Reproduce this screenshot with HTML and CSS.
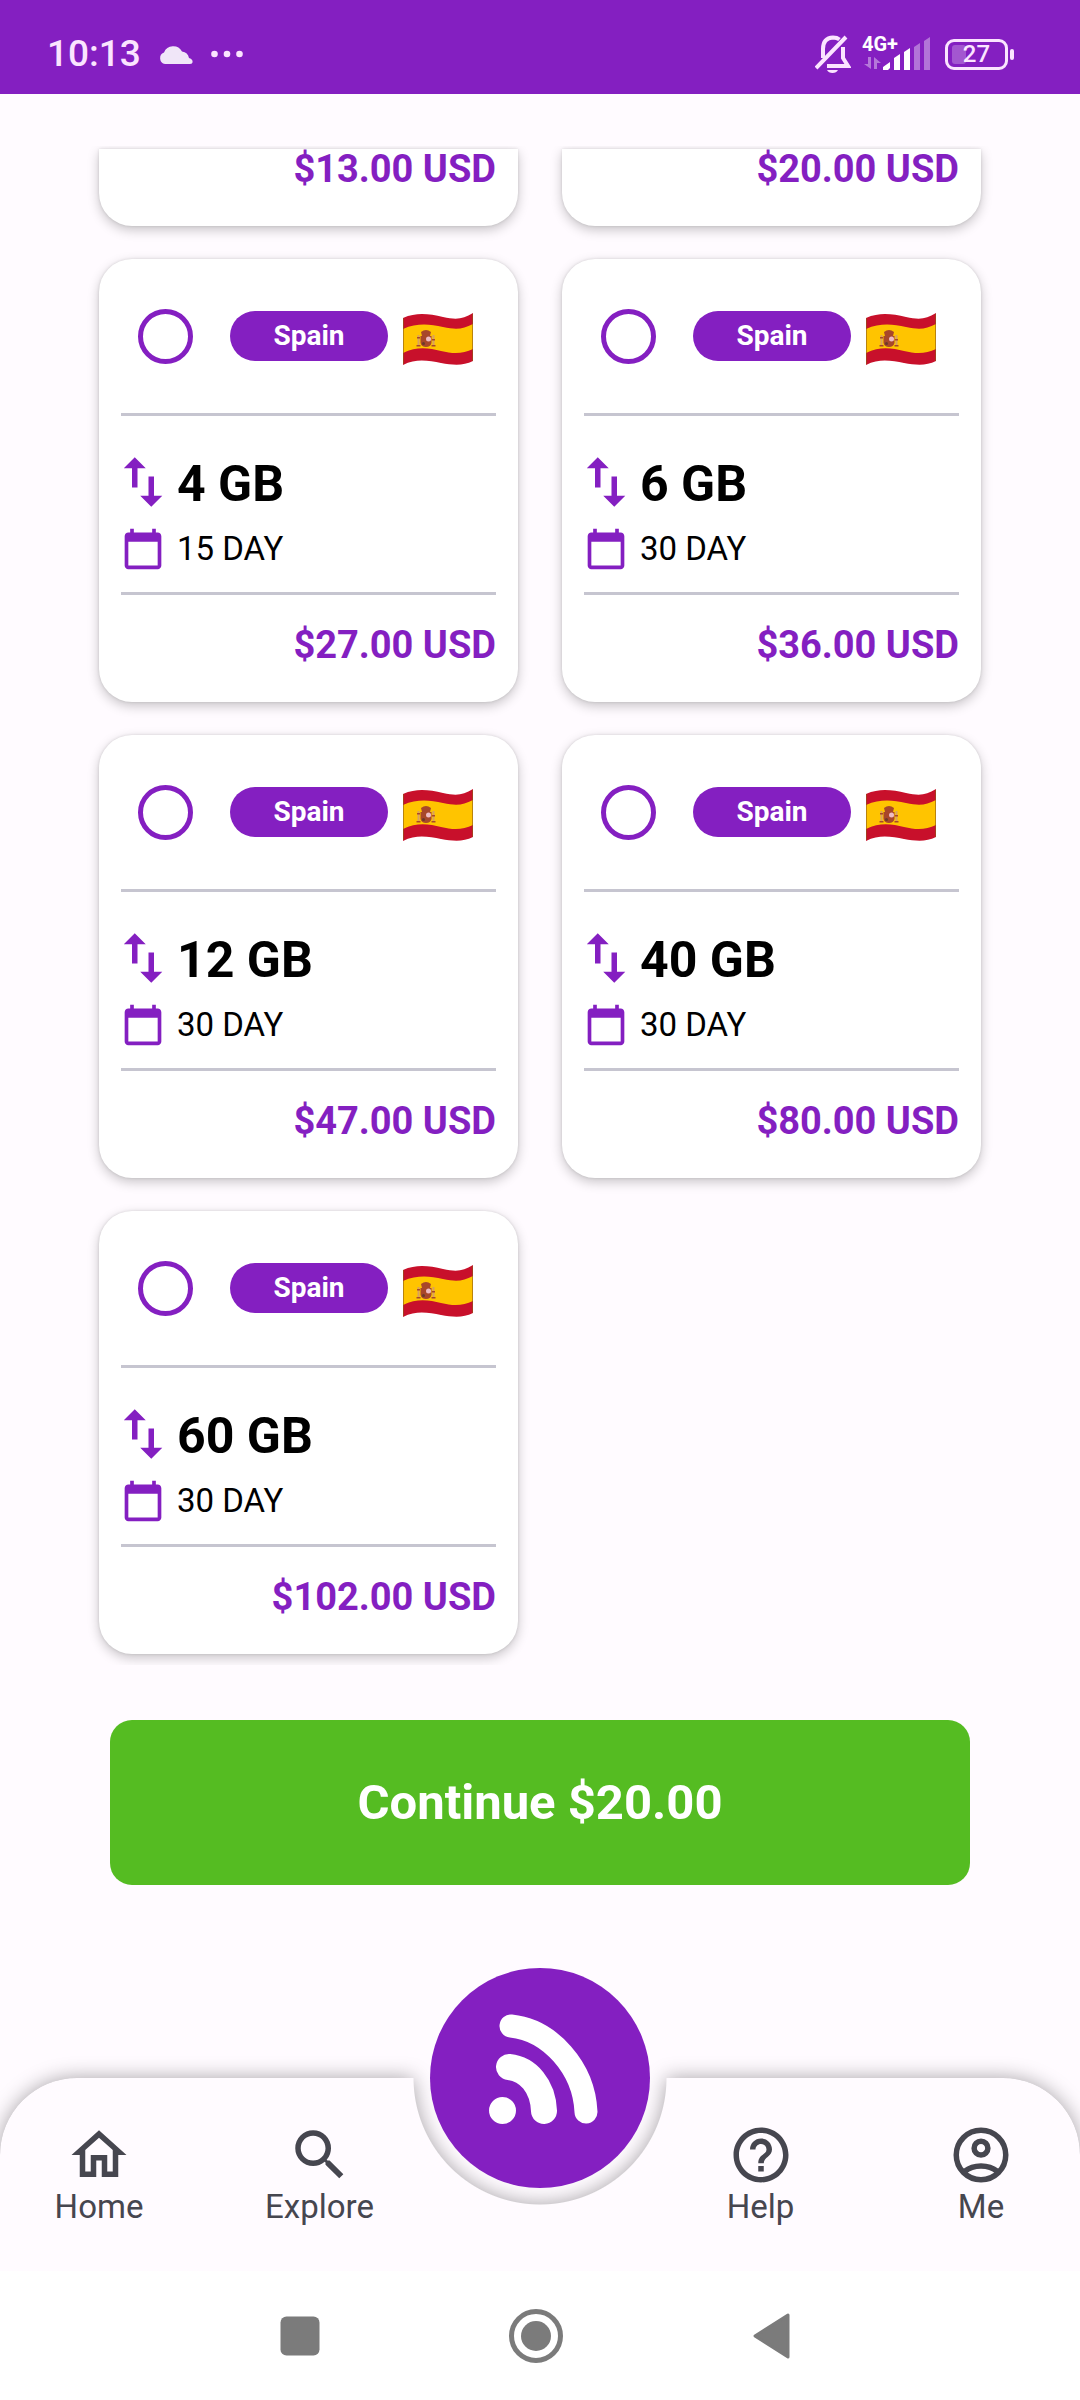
FILE: index.html
```html
<!DOCTYPE html>
<html lang="en">
<head>
<meta charset="utf-8">
<meta name="viewport" content="width=device-width, initial-scale=1">
<title>Spain plans</title>
<link rel="stylesheet" href="styles.css">
</head>
<body>
<svg class="sprite" aria-hidden="true">
  <symbol id="flag" viewBox="0 0 70 58">
    <path fill="#c8102b" d="M0 11C14 5 26 7 40 10S60 12 70 6V54C60 59 50 58 38 56S14 51 0 58Z"/>
    <path fill="#ffc400" d="M0 22C14 16 26 17 40 20S60 22 70 17V42C60 47 50 47 38 44S14 39 0 46Z"/>
    <path fill="none" stroke="#8c5a14" stroke-width="1" opacity=".6" d="M0.5 11V57M69.5 7V54"/>
    <g fill="#a8472a">
      <path d="M18 25q5-4 10 0l-1 4h-8z"/>
      <path d="M17.500 29h11v7q-1 4-5.500 4t-5.500-4z"/>
      <path fill="#d9a15e" d="M14.500 28h2v10h-2zM29.500 28h2v10h-2z"/>
      <path d="M14 30h3v1.500h-3zM29 32h3v1.500h-3zM13.500 38h4v1.500h-4zM28.500 38h4v1.500h-4z"/>
      <circle cx="25.500" cy="32" r="2.500" fill="#eebcc4"/>
      <circle cx="20.500" cy="36.500" r="1.500" fill="#6b3a2a"/>
    </g>
  </symbol>
  <symbol id="swap" viewBox="4 3 16 18">
    <path fill="currentColor" d="M16 17.010V10h-2v7.010h-3L15 21l4-3.990zM9 3L5 6.990h3V14h2V6.990h3z"/>
  </symbol>
  <symbol id="calendar" viewBox="0 0 24 24">
    <path fill="currentColor" d="M20 3h-1V1h-2v2H7V1H5v2H4c-1.100 0-2 .9-2 2v16c0 1.100.9 2 2 2h16c1.100 0 2-.9 2-2V5c0-1.100-.9-2-2-2zm0 18H4V8h16z"/>
  </symbol>
</svg>

<header class="status">
  <span class="clock">10:13</span>
  <svg class="cloud" viewBox="0 0 34 19" aria-hidden="true"><path fill="currentColor" d="M6 19a6 6 0 0 1-1-11.500A10 10 0 0 1 23 6.500a8 8 0 0 1 7 6.500c3 1 4 2.500 3.500 4.500q-.5 1.500-3 1.500z"/></svg>
  <svg class="dots" viewBox="0 0 32 8" aria-hidden="true"><g fill="currentColor"><circle cx="3.500" cy="4" r="3.300"/><circle cx="16" cy="4" r="3.300"/><circle cx="28.500" cy="4" r="3.300"/></g></svg>
  <svg class="bell" viewBox="0 0 36 38" aria-hidden="true">
    <g fill="none" stroke="currentColor" stroke-width="4"><path d="M8 23V14Q8 3 18 2.500q4 0 6.500 2M28 12v11l5 8H12M1 33L31 2"/></g>
    <path fill="currentColor" d="M12 35h11q-1.500 3-5.500 3T12 35z"/>
  </svg>
  <span class="signal">
    <span class="network">4G+</span>
    <svg class="bars" viewBox="0 0 70 34" aria-hidden="true">
      <g fill="currentColor">
        <path opacity=".4" d="M6 20h3v12L2 27h4zM12 32V20l7 6h-4v6z"/>
        <path d="M21 33v-3l7-5v6l-2 2zM32 21l6-4v16h-6zM42 15l6-4v22h-6z"/>
        <path opacity=".38" d="M52 10l6-4v27h-6zM62 4l6-4v33h-6z"/>
      </g>
    </svg>
  </span>
  <span class="battery"><span class="level"></span>27</span>
</header>

<main class="page">
  <section class="plans" aria-label="Plans">
    <article class="card card-cut"><p class="price">$13.00 USD</p></article>
    <article class="card card-cut"><p class="price">$20.00 USD</p></article>

    <label class="card">
      <span class="head"><input class="radio" type="radio" name="plan"><span class="pill">Spain</span><svg class="flag"><use href="#flag"/></svg></span>
      <span class="body">
        <span class="data"><svg class="swap"><use href="#swap"/></svg>4 GB</span>
        <span class="days"><svg class="cal"><use href="#calendar"/></svg>15 DAY</span>
      </span>
      <span class="price">$27.00 USD</span>
    </label>
    <label class="card">
      <span class="head"><input class="radio" type="radio" name="plan"><span class="pill">Spain</span><svg class="flag"><use href="#flag"/></svg></span>
      <span class="body">
        <span class="data"><svg class="swap"><use href="#swap"/></svg>6 GB</span>
        <span class="days"><svg class="cal"><use href="#calendar"/></svg>30 DAY</span>
      </span>
      <span class="price">$36.00 USD</span>
    </label>
    <label class="card">
      <span class="head"><input class="radio" type="radio" name="plan"><span class="pill">Spain</span><svg class="flag"><use href="#flag"/></svg></span>
      <span class="body">
        <span class="data"><svg class="swap"><use href="#swap"/></svg>12 GB</span>
        <span class="days"><svg class="cal"><use href="#calendar"/></svg>30 DAY</span>
      </span>
      <span class="price">$47.00 USD</span>
    </label>
    <label class="card">
      <span class="head"><input class="radio" type="radio" name="plan"><span class="pill">Spain</span><svg class="flag"><use href="#flag"/></svg></span>
      <span class="body">
        <span class="data"><svg class="swap"><use href="#swap"/></svg>40 GB</span>
        <span class="days"><svg class="cal"><use href="#calendar"/></svg>30 DAY</span>
      </span>
      <span class="price">$80.00 USD</span>
    </label>
    <label class="card">
      <span class="head"><input class="radio" type="radio" name="plan"><span class="pill">Spain</span><svg class="flag"><use href="#flag"/></svg></span>
      <span class="body">
        <span class="data"><svg class="swap"><use href="#swap"/></svg>60 GB</span>
        <span class="days"><svg class="cal"><use href="#calendar"/></svg>30 DAY</span>
      </span>
      <span class="price">$102.00 USD</span>
    </label>
  </section>
  <button class="continue" type="button">Continue $20.00</button>
</main>

<nav class="tabs" aria-label="Main">
  <div class="tabs-shadow"><div class="tabs-shape"></div></div>
  <a class="tab" href="#home"><svg viewBox="0 0 24 24"><path fill="currentColor" d="M12 5.690l5 4.500V18h-2v-6H9v6H7v-7.810l5-4.500M12 3L2 12h3v8h6v-6h2v6h6v-8h3z"/></svg>Home</a>
  <a class="tab" href="#explore"><svg viewBox="0 0 24 24"><path fill="currentColor" d="M15.500 14h-.79l-.28-.27A6.471 6.471 0 0 0 16 9.500 6.500 6.500 0 1 0 9.500 16c1.610 0 3.090-.59 4.230-1.570l.27.28v.79l5 4.990L20.490 19zm-6 0C7.010 14 5 11.990 5 9.500S7.010 5 9.500 5 14 7.010 14 9.500 11.990 14 9.500 14z"/></svg>Explore</a>
  <button class="fab" type="button" aria-label="eSIM">
    <svg viewBox="0 0 116 116"><g fill="none" stroke="#fff" stroke-linecap="round"><path stroke-width="23" d="M26 14C65 18 99 56 101 100"/><path stroke-width="26" d="M24 55C43 57 58 74 59 99"/></g><circle cx="17.500" cy="98.500" r="13.500" fill="#fff"/></svg>
  </button>
  <a class="tab" href="#help"><svg viewBox="0 0 24 24"><path fill="currentColor" d="M11 18h2v-2h-2zm1-16C6.480 2 2 6.480 2 12s4.480 10 10 10 10-4.480 10-10S17.520 2 12 2zm0 18c-4.410 0-8-3.590-8-8s3.590-8 8-8 8 3.590 8 8-3.590 8-8 8zm0-14c-2.210 0-4 1.790-4 4h2c0-1.100.9-2 2-2s2 .9 2 2c0 2-3 1.750-3 5h2c0-2.250 3-2.500 3-5 0-2.210-1.790-4-4-4z"/></svg>Help</a>
  <a class="tab" href="#me"><svg viewBox="0 0 24 24"><g fill="none" stroke="currentColor" stroke-width="2"><circle cx="12" cy="12" r="9"/><circle cx="12" cy="9.500" r="2.500"/><path d="M6 18c3.300-2.700 8.700-2.700 12 0"/></g></svg>Me</a>
</nav>

<footer class="system">
  <button class="key" type="button" aria-label="Recents"><svg viewBox="0 0 60 60"><rect x="10.500" y="10.500" width="39" height="39" rx="6" fill="currentColor"/></svg></button>
  <button class="key" type="button" aria-label="Home screen"><svg viewBox="0 0 60 60"><circle cx="30" cy="30" r="24.500" fill="none" stroke="currentColor" stroke-width="5"/><circle cx="30" cy="30" r="15" fill="currentColor"/></svg></button>
  <button class="key" type="button" aria-label="Back"><svg viewBox="0 0 60 60"><path fill="currentColor" stroke="currentColor" stroke-width="3" stroke-linejoin="round" d="M13 30L46 9V51z"/></svg></button>
</footer>
</body>
</html>
```
FILE: styles.css
```css
* {
  box-sizing: border-box;
}

body {
  margin: 0;
  min-height: 100vh;
  display: flex;
  flex-direction: column;
  background: #fffbff;
  color: #000;
  font-family: Roboto, "Liberation Sans", sans-serif;
}

button {
  border: 0;
  padding: 0;
  font: inherit;
}

svg {
  display: block;
  flex: none;
}

.sprite {
  position: absolute;
  width: 0;
  height: 0;
}

/* Status bar */
.status {
  display: flex;
  align-items: center;
  height: 94px;
  padding: 14px 66px 0 47px;
  background: #841fc1;
  color: #fbe4ff;
}

.clock {
  font-size: 37px;
  line-height: 44px;
  font-weight: 500;
}

.cloud {
  width: 34px;
  height: 19px;
  margin-left: 18px;
  color: #f0e6f8;
}

.dots {
  width: 32px;
  height: 8px;
  margin-left: 18px;
}

.bell {
  width: 36px;
  height: 38px;
  margin-left: auto;
}

.signal {
  position: relative;
  margin: 0 13px 0 11px;
  color: #fff;
}

.network {
  position: absolute;
  top: -3px;
  left: 0;
  font-size: 20px;
  line-height: 20px;
  font-weight: 700;
}

.bars {
  width: 70px;
  height: 34px;
}

.battery {
  position: relative;
  display: flex;
  align-items: center;
  justify-content: center;
  width: 63px;
  height: 31px;
  margin-right: 6px;
  border: 3px solid #fbe4ff;
  border-radius: 9px;
  font-size: 24px;
  line-height: 24px;
  font-weight: 500;
}

.battery::after {
  content: "";
  position: absolute;
  top: 7px;
  right: -9px;
  width: 4px;
  height: 11px;
  border-radius: 2px;
  background: #fbe4ff;
}

.level {
  position: absolute;
  top: 3px;
  left: 4px;
  width: 14px;
  height: 19px;
  border-radius: 3px;
  background: #fff;
  opacity: .25;
}

/* Plan list */
.page {
  flex: 1;
  padding-top: 52px;
}

.plans {
  display: grid;
  grid-template-columns: 1fr 1fr;
  gap: 33px 44px;
  padding: 3px 99px 11px;
  overflow: hidden;
}

.card {
  display: flex;
  flex-direction: column;
  padding: 0 22px;
  border-radius: 33px;
  background: #fff;
  box-shadow: 0 4px 12px rgba(0, 0, 0, .22), 0 0 3px rgba(0, 0, 0, .12);
}

.card-cut {
  border-radius: 0 0 33px 33px;
}

.card-cut .price {
  padding-top: 1px;
}

.head {
  display: flex;
  align-items: center;
  height: 154px;
  padding-left: 17px;
}

.radio {
  appearance: none;
  flex: none;
  width: 55px;
  height: 55px;
  margin: 0 37px 0 0;
  border: 5px solid #841fc1;
  border-radius: 50%;
}

.pill {
  width: 158px;
  margin-right: 15px;
  border-radius: 25px;
  background: #841fc1;
  color: #fff;
  font-size: 28px;
  line-height: 50px;
  font-weight: 700;
  text-align: center;
}

.flag {
  width: 70px;
  height: 58px;
}

.body {
  display: flex;
  flex-direction: column;
  gap: 10px;
  padding: 35px 0 21px;
  border: solid #c6c5d0;
  border-width: 3px 0;
}

.data,
.days {
  display: flex;
  align-items: center;
  gap: 12px;
}

.data {
  font-size: 50px;
  line-height: 66px;
  font-weight: 700;
}

.days {
  font-size: 33px;
  line-height: 44px;
}

.swap,
.cal {
  color: #841fc1;
}

.swap {
  width: 44px;
  height: 50px;
  margin-bottom: 4px;
}

.cal {
  width: 44px;
  height: 44px;
}

.price {
  margin: 0;
  padding: 31px 0 38px;
  color: #841fc1;
  font-size: 38px;
  line-height: 38px;
  font-weight: 700;
  text-align: right;
}

.continue {
  display: block;
  width: calc(100% - 220px);
  height: 165px;
  margin: 55px auto;
  border-radius: 22px;
  background: #55bc22;
  color: #fff;
  font-size: 49px;
  font-weight: 700;
}

/* Tab bar */
.tabs {
  position: relative;
  display: flex;
  justify-content: space-between;
  height: 193px;
  padding: 44px 44px 0;
}

.tabs-shadow {
  position: absolute;
  inset: 0;
  filter: drop-shadow(0 0 10px rgba(0, 0, 0, .35));
}

.tabs-shape {
  height: 100%;
  border-radius: 77px 77px 0 0;
  background: #fffbff;
  -webkit-mask: radial-gradient(circle at 50% 0, transparent 126px, #000 127px);
  mask: radial-gradient(circle at 50% 0, transparent 126px, #000 127px);
}

.tab {
  position: relative;
  display: flex;
  flex-direction: column;
  align-items: center;
  width: 110px;
  color: #46464f;
  font-size: 33px;
  line-height: 38px;
  text-decoration: none;
}

.tab svg {
  width: 66px;
  height: 66px;
}

.fab {
  position: relative;
  display: flex;
  align-items: center;
  justify-content: center;
  flex: none;
  width: 220px;
  height: 220px;
  margin: -154px -55px 0;
  padding: 0 0 16px 6px;
  border-radius: 50%;
  background: #841fc1;
}

.fab svg {
  width: 116px;
  height: 116px;
}

/* System keys */
.system {
  position: relative;
  display: flex;
  align-items: center;
  justify-content: center;
  gap: 176px;
  height: 129px;
  padding-right: 8px;
  background: #fff;
}

.key {
  width: 60px;
  height: 60px;
  background: none;
  color: #7b7b7b;
}
```
